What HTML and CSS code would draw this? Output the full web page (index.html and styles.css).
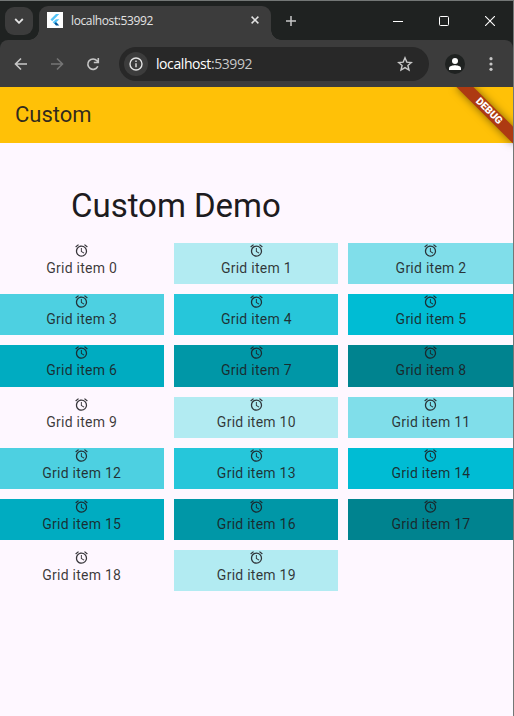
FILE: index.html
```html
<!DOCTYPE html>
<html lang="en">
<head>
<meta charset="utf-8">
<title>Custom</title>
<link rel="stylesheet" href="styles.css">
</head>
<body>
<div class="window">
  <header class="tabstrip">
    <div class="tabsearch"><svg width="10" height="6" viewBox="0 0 10 6"><path d="M1.200 1l3.800 3.800L8.800 1" fill="none" stroke="#e3e3e3" stroke-width="1.800"/></svg></div>
    <div class="tab">
      <svg class="favicon" width="16" height="16" viewBox="0 0 16 16"><path fill="#fff" d="M0 0h16v16H0z"/><path fill="#54c5f8" d="M9 2h3.300L5.200 9.200 3.500 7.500z"/><path fill="#54c5f8" d="M9 7.200h3.300L9.300 10.200 7.600 11.900 5.600 10.200z"/><path fill="#01579b" d="M7.300 11.600L9 9.900l3.300 3.500H9z"/></svg>
      <span class="tab-title">localhost:53992</span>
      <svg class="tab-close" width="8" height="8" viewBox="0 0 8 8"><path d="M.6.6l6.800 6.800M7.400.6L.6 7.400" stroke="#e3e3e3" stroke-width="1.500"/></svg>
    </div>
    <svg class="newtab" width="10" height="10" viewBox="0 0 10 10"><path d="M5 0v10M0 5h10" stroke="#c7c7c7" stroke-width="1.500"/></svg>
    <div class="controls">
      <svg width="10" height="10" viewBox="0 0 10 10"><path d="M0 5.500h10" stroke="#fff"/></svg>
      <svg width="10" height="10" viewBox="0 0 10 10"><rect x=".5" y=".5" width="9" height="9" rx="1" fill="none" stroke="#fff"/></svg>
      <svg width="10" height="10" viewBox="0 0 10 10"><path d="M0 0l10 10M10 0L0 10" stroke="#fff" stroke-width="1.100"/></svg>
    </div>
  </header>
  <nav class="toolbar">
    <svg class="nav-icon" viewBox="0 0 16 16"><path d="M14 8H3M8 2.500L2.500 8 8 13.500" fill="none" stroke="#c7c7c7" stroke-width="1.600"/></svg>
    <svg class="nav-icon" viewBox="0 0 16 16"><path d="M2 8h11M8 2.500L13.500 8 8 13.500" fill="none" stroke="#757575" stroke-width="1.600"/></svg>
    <svg class="nav-icon" viewBox="0 0 16 16"><path d="M12.800 10.200A5.200 5.200 0 1 1 12 4.800l1 1.200M13.300 2v4.500H8.800" fill="none" stroke="#c7c7c7" stroke-width="1.600"/></svg>
    <div class="omnibox">
      <span class="site-info"><svg width="14" height="14" viewBox="0 0 14 14"><circle cx="7" cy="7" r="6" fill="none" stroke="#e3e3e3" stroke-width="1.400"/><path d="M7 6.300v4M7 3.600v1.500" stroke="#e3e3e3" stroke-width="1.400"/></svg></span>
      <span class="url">localhost<span class="port">:53992</span></span>
      <svg class="star" width="16" height="16" viewBox="0 0 16 16"><path d="M8 1.800l1.800 4.300 4.600.4-3.500 3 1.100 4.500L8 11.600 4 14l1.100-4.500-3.500-3 4.600-.4z" fill="none" stroke="#c7c7c7" stroke-width="1.400"/></svg>
    </div>
    <span class="avatar"><svg width="12" height="12" viewBox="0 0 12 12"><circle cx="6" cy="3" r="3" fill="#fff"/><path d="M0 12v-1.800C0 8 4 7.200 6 7.200s6 .8 6 3V12z" fill="#fff"/></svg></span>
    <svg class="menu" width="4" height="14" viewBox="0 0 4 14" fill="#c7c7c7"><circle cx="2" cy="1.700" r="1.600"/><circle cx="2" cy="7" r="1.600"/><circle cx="2" cy="12.300" r="1.600"/></svg>
  </nav>
  <main class="app">
    <div class="appbar">Custom</div>
    <div class="banner"><span>DEBUG</span></div>
    <h1>Custom Demo</h1>
    <div class="grid" id="grid"></div>
  </main>
</div>
<script src="grid.js"></script>
</body>
</html>
```
FILE: styles.css
```css
* { box-sizing: border-box; }
body { margin: 0; background: #737776; overflow: hidden; }
svg { display: block; flex: none; }
.window { width: 513px; height: 716px; border-top: 1px solid #737776; display: flex; flex-direction: column; background: #1f2221; overflow: hidden; }
.tabstrip { height: 39px; display: flex; align-items: center; background: #1f2221; flex: none; }
.tabsearch { width: 28px; height: 28px; margin-left: 5px; border-radius: 9px; background: #3c3c3c; display: flex; align-items: center; justify-content: center; }
.tab { position: relative; width: 232px; height: 34px; margin: 5px 0 0 6px; padding: 0 12px 6px 8px; display: flex; align-items: center; border-radius: 9px 9px 0 0; background: #3c3c3c; }
.tab::before, .tab::after { content: ""; position: absolute; bottom: 0; width: 10px; height: 10px; }
.tab::before { left: -10px; background: radial-gradient(circle at 0 0, transparent 9.500px, #3c3c3c 10px); }
.tab::after { right: -10px; background: radial-gradient(circle at 100% 0, transparent 9.500px, #3c3c3c 10px); }
.tab-title { margin: 2px 0 0 8px; font: 12px/16px "Open Sans", sans-serif; color: #e3e3e3; letter-spacing: -.38px; }
.tab-close { margin-left: auto; }
.newtab { margin-left: 15px; }
.controls { display: flex; gap: 36px; margin: 0 18px 0 auto; }
.toolbar { height: 47px; display: flex; align-items: center; background: #3c3c3c; border-radius: 8px 8px 0 0; padding: 0 20px 0 13px; flex: none; }
.nav-icon { width: 16px; height: 16px; margin-right: 20px; }
.omnibox { width: 310px; height: 34px; margin-left: -2px; border-radius: 17px; background: #282828; display: flex; align-items: center; padding: 0 16px 0 5px; }
.site-info { width: 24px; height: 24px; border-radius: 50%; background: #3c3c3c; display: flex; align-items: center; justify-content: center; }
.url { margin-left: 8px; font: 14px/20px "Open Sans", sans-serif; color: #fff; letter-spacing: -.42px; }
.port { color: #c7c7c7; }
.star { margin-left: auto; }
.avatar { width: 20px; height: 20px; margin-left: 16px; border-radius: 50%; background: #1f2221; display: flex; align-items: center; justify-content: center; }
.menu { margin-left: auto; }
.app { position: relative; flex: 1; background: #fef7ff; overflow: hidden; font-family: Roboto, sans-serif; color: #1d1b20; }
.appbar { height: 56px; padding-left: 15px; background: #ffc107; font-size: 22px; line-height: 56px; color: rgba(29, 27, 32, .93); }
.banner { position: absolute; top: 28px; right: -40px; width: 80px; height: 12px; transform-origin: 50% -28px; transform: rotate(45deg); background: #ad3a12; box-shadow: 0 0 9px rgba(0, 0, 0, .5); }
.banner span { display: block; text-align: center; color: #fff; font-size: 10.2px; line-height: 12px; font-weight: 900; }
h1 { margin: 43px 0 17.100px 71px; font-size: 33px; line-height: 40px; font-weight: 400; letter-spacing: -.02px; }
.grid { width: 514px; margin-left: -.85px; display: grid; grid-template-columns: repeat(3, 1fr); grid-auto-rows: 41.170px; gap: 10px; }
.cell { display: flex; flex-direction: column; align-items: center; font-size: 14px; line-height: 20px; letter-spacing: .25px; color: rgba(29, 27, 32, .88); }
.cell span { margin-left: .4px; }
.shade-1 { background: #b2ebf2; }
.shade-2 { background: #80deea; }
.shade-3 { background: #4dd0e1; }
.shade-4 { background: #26c6da; }
.shade-5 { background: #00bcd4; }
.shade-6 { background: #00acc1; }
.shade-7 { background: #0097a7; }
.shade-8 { background: #00838f; }
```
FILE: grid.js
```js
const alarm = '<svg width="15" height="15" viewBox="0 0 24 24" fill="currentColor"><path d="M22 5.720l-4.600-3.860-1.290 1.530 4.600 3.860L22 5.720zM7.880 3.390L6.600 1.860 2 5.710l1.290 1.530 4.590-3.850zM12.500 8H11v6l4.750 2.850.75-1.230-4-2.370V8zM12 4c-4.970 0-9 4.030-9 9s4.020 9 9 9a9 9 0 0 0 0-18zm0 16c-3.870 0-7-3.130-7-7s3.130-7 7-7 7 3.130 7 7-3.130 7-7 7z"/></svg>';
document.getElementById('grid').innerHTML = Array.from({ length: 20 }, (_, i) =>
  `<div class="cell shade-${i % 9}">${alarm}<span>Grid item ${i}</span></div>`).join('');
```
